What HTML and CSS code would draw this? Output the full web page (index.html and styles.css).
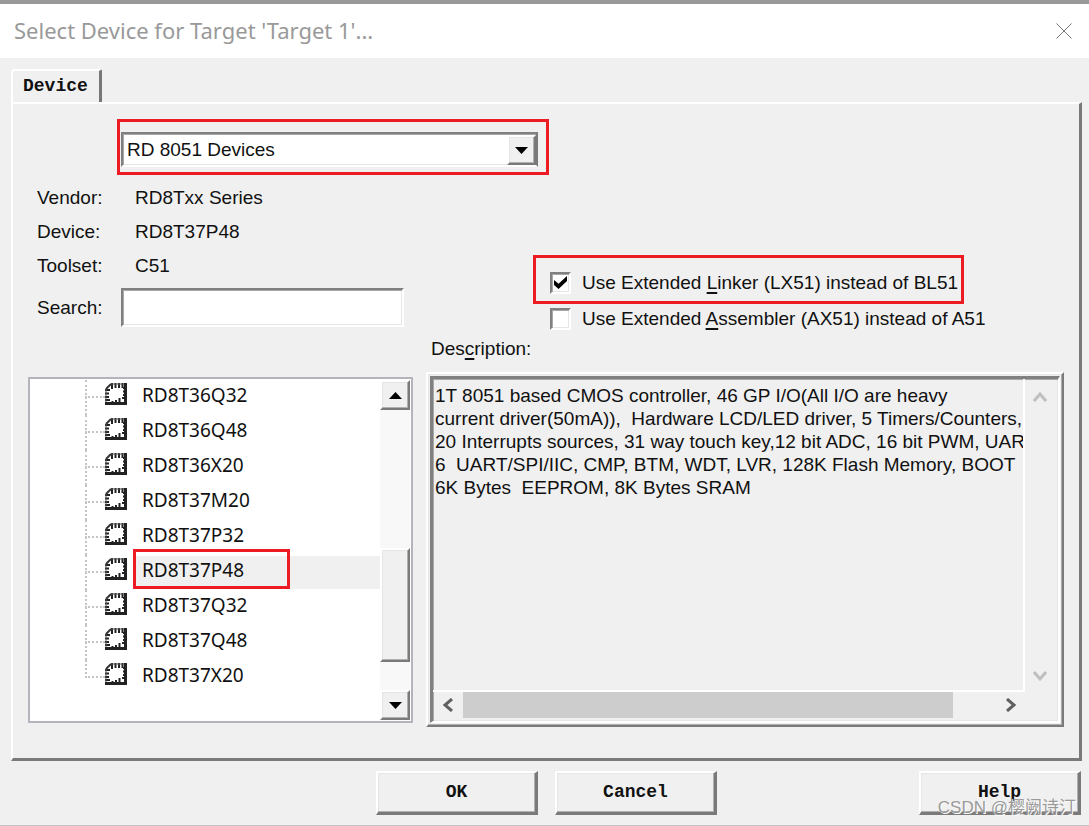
FILE: index.html
```html
<!DOCTYPE html>
<html lang="en">
<head>
<meta charset="utf-8">
<title>Select Device for Target 'Target 1'...</title>
<link rel="stylesheet" href="styles.css">
</head>
<body>
<svg class="defs" aria-hidden="true">
  <symbol id="chip" viewBox="0 0 22 22">
    <path d="M1 21V6L6 1h15v20z" fill="#fff"/>
    <path d="M1 6L6 1" stroke="#333" stroke-width="2"/>
    <path d="M7 0v6M10.500 0v5M14 0v5M17.500 0v5" stroke="#222" stroke-width="2"/>
    <path d="M0 7h5M0 10.500h4M0 14h4M0 17h5" stroke="#222" stroke-width="2"/>
    <path d="M6 1h15" stroke="#555" stroke-width="1"/>
    <path d="M1 6v15" stroke="#555" stroke-width="1"/>
    <path d="M20.500 0v22M0 20.500h22" stroke="#222" stroke-width="3"/>
    <path d="M18 5h3M18 8.500h3M18 12h3M17 15h4M7.500 18v3M11 17v4M14.500 15v6" stroke="#222" stroke-width="2"/>
    <path d="M16 17h3v2h-3z" fill="#fff"/>
  </symbol>
  <symbol id="up" viewBox="0 0 13 7"><path d="M0 7L6.500 0L13 7z"/></symbol>
  <symbol id="down" viewBox="0 0 13 7"><path d="M0 0h13L6.500 7z"/></symbol>
</svg>
<main class="dialog">
  <header class="titlebar">
    <h1 class="title">Select Device for Target 'Target 1'...</h1>
    <button class="close" aria-label="Close"><svg width="16" height="16" viewBox="0 0 16 16"><path d="M.5.5l15 15M15.500.5l-15 15" stroke="#777" fill="none"/></svg></button>
  </header>
  <div class="tabs"><button class="tab">Device</button></div>
  <section class="panel">
    <div class="family mark">
      <div class="combo sunken">
        <select class="combo-select" aria-label="Device database"><option>RD 8051 Devices</option></select>
        <span class="combo-arrow raised"><svg width="13" height="7"><use href="#down"/></svg></span>
      </div>
    </div>
    <div class="details">
      <div class="fields">
        <span>Vendor:</span><span class="value">RD8Txx Series</span>
        <span>Device:</span><span class="value">RD8T37P48</span>
        <span>Toolset:</span><span class="value">C51</span>
        <label for="search">Search:</label><input id="search" class="search sunken" type="text">
      </div>
      <div class="options">
        <label class="option mark"><input type="checkbox" class="check sunken" checked><span>Use Extended <u>L</u>inker (LX51) instead of BL51</span></label>
        <label class="option plain"><input type="checkbox" class="check sunken"><span>Use Extended <u>A</u>ssembler (AX51) instead of A51</span></label>
      </div>
    </div>
    <div class="lower">
      <div class="listbox">
        <ul class="tree">
          <li class="node"><svg class="chip"><use href="#chip"/></svg><span class="name">RD8T36Q32</span></li>
          <li class="node"><svg class="chip"><use href="#chip"/></svg><span class="name">RD8T36Q48</span></li>
          <li class="node"><svg class="chip"><use href="#chip"/></svg><span class="name">RD8T36X20</span></li>
          <li class="node"><svg class="chip"><use href="#chip"/></svg><span class="name">RD8T37M20</span></li>
          <li class="node"><svg class="chip"><use href="#chip"/></svg><span class="name">RD8T37P32</span></li>
          <li class="node selected"><svg class="chip"><use href="#chip"/></svg><span class="name">RD8T37P48</span></li>
          <li class="node"><svg class="chip"><use href="#chip"/></svg><span class="name">RD8T37Q32</span></li>
          <li class="node"><svg class="chip"><use href="#chip"/></svg><span class="name">RD8T37Q48</span></li>
          <li class="node"><svg class="chip"><use href="#chip"/></svg><span class="name">RD8T37X20</span></li>
        </ul>
        <div class="scroll">
          <button class="scroll-btn raised" aria-label="Scroll up"><svg width="13" height="7"><use href="#up"/></svg></button>
          <div class="track-before"></div>
          <div class="thumb raised"></div>
          <div class="track-after"></div>
          <button class="scroll-btn raised" aria-label="Scroll down"><svg width="13" height="7"><use href="#down"/></svg></button>
        </div>
      </div>
      <div class="description">
        <label class="desc-label" for="desc">Des<u>c</u>ription:</label>
        <div class="frame raised">
          <div class="frame-inner sunken">
            <textarea id="desc" class="desc-text" readonly wrap="off">1T 8051 based CMOS controller, 46 GP I/O(All I/O are heavy
current driver(50mA)),  Hardware LCD/LED driver, 5 Timers/Counters,
20 Interrupts sources, 31 way touch key,12 bit ADC, 16 bit PWM, UART
6  UART/SPI/IIC, CMP, BTM, WDT, LVR, 128K Flash Memory, BOOT
6K Bytes  EEPROM, 8K Bytes SRAM</textarea>
            <div class="vbar">
              <svg class="chev" width="14" height="12" viewBox="0 0 14 12"><path d="M1 10l6-7l6 7" stroke="#bfbfbf"/></svg>
              <svg class="chev" width="14" height="12" viewBox="0 0 14 12"><path d="M1 2l6 7l6-7" stroke="#bfbfbf"/></svg>
            </div>
            <div class="hbar">
              <svg class="chev" width="12" height="14" viewBox="0 0 12 14"><path d="M10 1l-7 6l7 6" stroke="#606060"/></svg>
              <div class="hthumb"></div>
              <svg class="chev" width="12" height="14" viewBox="0 0 12 14"><path d="M2 1l7 6l-7 6" stroke="#606060"/></svg>
            </div>
          </div>
        </div>
      </div>
    </div>
  </section>
  <footer class="actions">
    <button class="action raised">OK</button>
    <button class="action raised">Cancel</button>
    <button class="action help raised">Help</button>
  </footer>
  <span class="watermark">CSDN @樱阙诗汀</span>
</main>
</body>
</html>
```
FILE: styles.css
```css
* { box-sizing: border-box; }
body {
  margin: 0;
  background: #f0f0f0;
  color: #111;
  font: 19px/24px "Liberation Sans", Arial, sans-serif;
}
button, input, select, textarea { font: inherit; color: inherit; border-radius: 0; }
.defs { position: absolute; width: 0; height: 0; }
.dialog {
  position: relative;
  display: flex;
  flex-direction: column;
  min-height: 100vh;
  border-top: 4px solid #999;
  border-bottom: 1px solid #c4c4c4;
}
.titlebar {
  display: flex;
  align-items: center;
  justify-content: space-between;
  height: 54px;
  padding: 0 17px 0 14px;
  background: #fff;
}
.title { margin: 0 0 2px; color: #999; font: 22px/30px "Noto Sans", sans-serif; }
.close { display: flex; padding: 0; border: 0; background: none; }
.raised {
  border: 2px solid;
  border-color: #fff #7a7a7a #7a7a7a #fff;
  background: #f0f0f0;
  box-shadow: inset -1px -1px #b0b0b0, inset 1px 1px #e6e6e6;
}
.sunken {
  border: 2px solid;
  border-color: #808080 #fff #fff #808080;
  background: #fff;
  box-shadow: inset 1px 1px #a8a8a8, inset -1px -1px #e6e6e6;
}
.mark { border: 3px solid #ed1c24; }

.tabs { display: flex; padding: 11px 11px 0; }
.tab {
  height: 34px;
  padding: 0 11px 2px 10px;
  border: 2px solid;
  border-color: #fff #777 transparent #fff;
  border-width: 2px 3px 0 2px;
  border-radius: 4px 2px 0 0;
  background: #f0f0f0;
  font: bold 18px/22px "Liberation Mono", monospace;
}
.panel {
  flex: 1;
  display: flex;
  flex-direction: column;
  margin: -1px 7px 0 11px;
  padding: 15px 15px 31px;
  border: 2px solid;
  border-color: #fff #7a7a7a #7a7a7a #fff;
  border-right-width: 3px;
  border-bottom-width: 3px;
}
.family { width: 432px; height: 56px; margin-left: 89px; padding: 10px 8px 6px 1px; }
.combo { display: flex; height: 35px; border-right-color: #7a7a7a; }
.combo-select {
  flex: 1;
  appearance: none;
  padding: 0 4px;
  border: 0;
  background: none;
  outline: 0;
}
.combo-arrow { display: flex; align-items: center; justify-content: center; width: 29px; margin-top: 1px; }

.details { display: flex; }
.fields {
  display: grid;
  grid-template-columns: 84px 283px;
  grid-template-rows: repeat(3, 34px) 44px;
  align-items: center;
  width: 505px;
  padding: 6px 0 0 9px;
}
.value { padding-left: 14px; }
.fields label { padding-top: 6px; }
.search { width: 100%; height: 39px; margin-top: 5px; padding: 0 4px; outline: 0; }
.options { flex: 1; display: flex; flex-direction: column; align-items: flex-start; padding-top: 80px; }
.option { display: flex; align-items: center; gap: 11px; height: 29px; padding-left: 17px; white-space: nowrap; }
.option.mark { height: 49px; padding: 6px 3px 0 14px; }
.check {
  appearance: none;
  display: grid;
  place-items: center;
  width: 21px;
  height: 22px;
  margin: 0;
}
.check:checked::after {
  content: "";
  width: 13px;
  height: 13px;
  background: #000;
  clip-path: polygon(0 30%, 35% 60%, 100% 0, 100% 38%, 35% 100%, 0 70%);
}
u { text-decoration-thickness: 2px; text-underline-offset: 3px; text-decoration-skip-ink: none; }

.lower {
  flex: 1;
  display: grid;
  grid-template-columns: 385fr 638fr;
  gap: 13px;
}
.listbox { display: flex; margin: 44px 0 4px; padding: 1px 1px 1px 0; border: 2px solid #b4b4bc; background: #fff; }
.tree {
  flex: 1;
  margin: 0;
  padding: 0;
  list-style: none;
  font-family: "Noto Sans", sans-serif;
}
.node { position: relative; display: flex; align-items: center; height: 35px; padding-left: 75px; }
.node::before {
  content: "";
  align-self: flex-start;
  height: 35px;
  margin-left: -20px;
  border-left: 2px dotted #c4c4c4;
}
.node::after {
  content: "";
  position: absolute;
  left: 55px;
  top: 16px;
  width: 20px;
  border-top: 2px dotted #c4c4c4;
}
.node:last-child::before { height: 18px; }
.chip { width: 22px; height: 22px; margin: 0 7px 8px 18px; }
.name { flex: 1; height: 33px; padding-left: 8px; line-height: 28px; }
.selected .name { background: #f0f0f0; }
.selected .name::after {
  content: "";
  position: absolute;
  left: 103px;
  top: -6px;
  box-sizing: border-box;
  width: 157px;
  height: 40px;
  border: 3px solid #ed1c24;
}
.scroll { display: flex; flex-direction: column; width: 30px; background: #f8f8f8; }
.scroll-btn { display: flex; align-items: center; justify-content: center; height: 30px; padding: 0; }
.track-before { flex: 140; }
.thumb { flex: 112; }
.track-after { flex: 28; }

.description { display: flex; flex-direction: column; min-width: 0; }
.desc-label { height: 39px; padding: 4px 0 0 5px; }
.frame { flex: 1; display: flex; padding: 2px; }
.frame-inner {
  flex: 1;
  display: grid;
  grid-template: 1fr 29px / 1fr 33px;
  min-width: 0;
  background: #f0f0f0;
  border-width: 3px 2px 2px 3px;
}
.desc-text {
  width: 100%;
  padding: 5px 0 0 2px;
  border: solid #fff;
  border-width: 0 2px 2px 0;
  background: none;
  line-height: 23px;
  outline: 0;
  overflow: hidden;
  resize: none;
}
.vbar { display: flex; flex-direction: column; align-items: center; justify-content: space-between; padding: 12px 4px 10px 0; }
.hbar { display: flex; align-items: center; gap: 9px; padding: 0 8px 3px 9px; }
.chev { flex: none; fill: none; stroke-width: 3px; }
.hthumb { flex: 0 1 490px; height: 26px; margin-right: auto; background: #cdcdcd; }

.actions { display: flex; gap: 17px; padding: 10px 8px 10px 376px; }
.action {
  width: 162px;
  height: 44px;
  padding: 0 0 1px;
  border-right-width: 3px;
  border-bottom-width: 3px;
  font: bold 18px/22px "Liberation Mono", monospace;
}
.help { margin-left: auto; }
.watermark {
  position: absolute;
  right: 13px;
  bottom: 5px;
  color: #999;
  font: 17px/24px "Liberation Sans", "Noto Sans CJK SC", sans-serif;
  text-shadow: 1px 1px #fff;
}
```
